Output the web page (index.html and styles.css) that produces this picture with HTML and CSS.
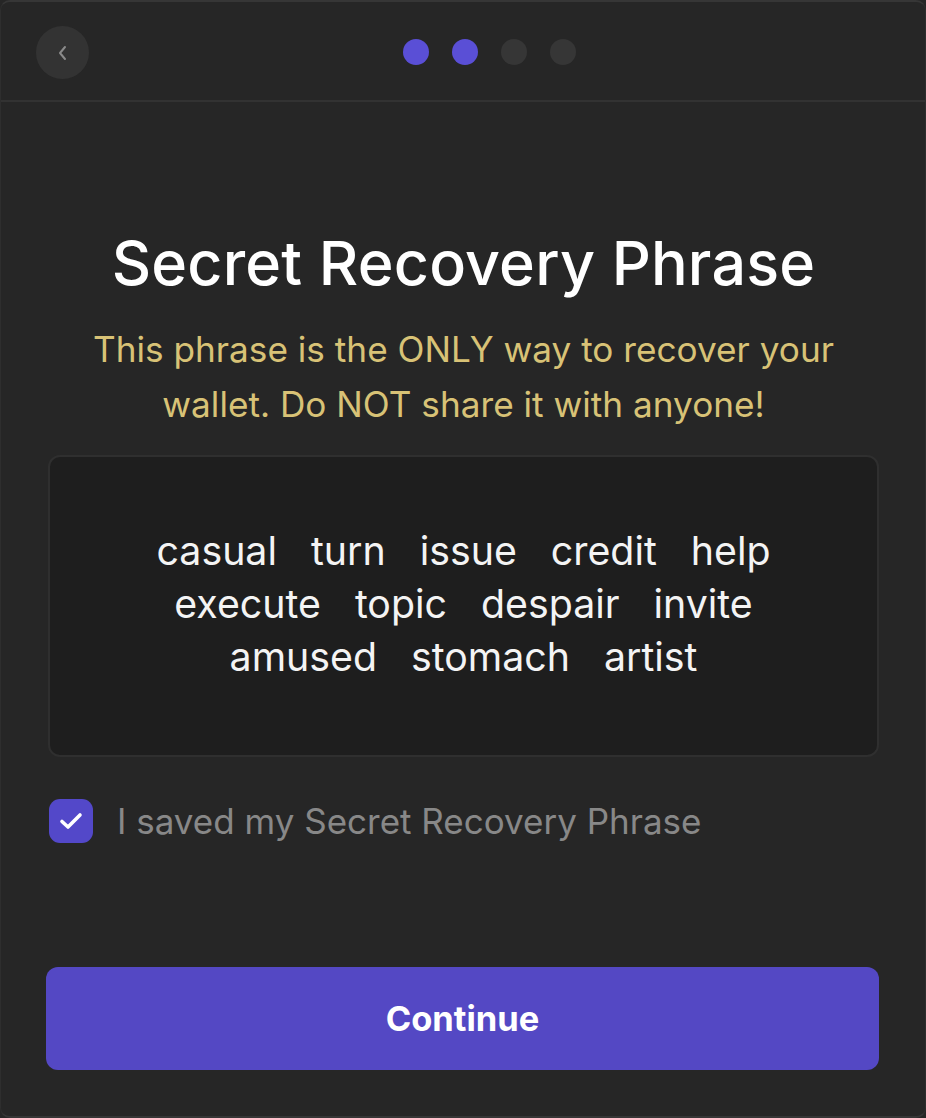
FILE: index.html
```html
<!DOCTYPE html>
<html lang="en">
<head>
<meta charset="utf-8">
<title>Secret Recovery Phrase</title>
<link rel="stylesheet" href="styles.css">
</head>
<body>
<div class="window">
  <header class="header">
    <button class="back" aria-label="Back">
      <svg width="14" height="20" viewBox="0 0 14 20"><path d="M9 4 L4 10 L9 16" fill="none" stroke="#8a8a8a" stroke-width="2" stroke-linecap="round" stroke-linejoin="round"/></svg>
    </button>
    <div class="steps">
      <span class="dot active"></span>
      <span class="dot active"></span>
      <span class="dot"></span>
      <span class="dot"></span>
    </div>
  </header>
  <main class="content">
    <h1 class="title">Secret Recovery Phrase</h1>
    <p class="warning">This phrase is the ONLY way to recover your wallet. Do NOT share it with anyone!</p>
    <div class="phrase">
      <div class="words">
        <span>casual</span><span>turn</span><span>issue</span><span>credit</span><span>help</span>
        <span>execute</span><span>topic</span><span>despair</span><span>invite</span>
        <span>amused</span><span>stomach</span><span>artist</span>
      </div>
    </div>
    <label class="check">
      <span class="box">
        <svg width="26" height="22" viewBox="0 0 26 22"><path d="M4 11.5 L10 17 L22 5" fill="none" stroke="#ffffff" stroke-width="3.6" stroke-linecap="round" stroke-linejoin="round"/></svg>
      </span>
      <span class="label">I saved my Secret Recovery Phrase</span>
    </label>
    <div class="spacer"></div>
    <button class="continue">Continue</button>
  </main>
</div>
</body>
</html>
```

FILE: styles.css
```css
* { box-sizing: border-box; }
html, body {
  margin: 0;
  padding: 0;
  background: #262626;
}
body {
  font-family: Inter, "Noto Sans", sans-serif;
  color: #ffffff;
}
.window {
  width: 926px;
  height: 1118px;
  background: #262626;
  border-top: 2px solid #363636;
  border-bottom: 2px solid #363636;
  border-left: 1px solid #2e2e2e;
  border-right: 1px solid #2e2e2e;
  border-radius: 10px;
  display: flex;
  flex-direction: column;
  overflow: hidden;
}
.header {
  position: relative;
  height: 100px;
  flex: 0 0 100px;
  border-bottom: 2px solid #323232;
  display: flex;
  align-items: center;
  justify-content: center;
}
.back {
  position: absolute;
  left: 35px;
  top: 24px;
  width: 53px;
  height: 53px;
  border-radius: 50%;
  border: none;
  background: #333333;
  display: flex;
  align-items: center;
  justify-content: center;
  padding: 0;
}
.steps {
  display: flex;
  gap: 23px;
  margin-left: 53px;
  margin-top: 2px;
}
.dot {
  width: 26px;
  height: 26px;
  border-radius: 50%;
  background: #363636;
}
.dot.active { background: #5a4fd6; }
.content {
  flex: 1;
  display: flex;
  flex-direction: column;
  padding: 128px 45px 46px 46px;
}
.title {
  margin: 0;
  text-align: center;
  font-size: 61px;
  font-weight: 500;
  line-height: 66px;
  letter-spacing: 0.2px;
}
.warning {
  margin: 26px 10px 0;
  text-align: center;
  color: #d8c276;
  font-size: 35.2px;
  line-height: 55px;
  font-weight: 400;
}
.phrase {
  margin-top: 23px;
  margin-left: 1px;
  margin-right: 1px;
  height: 302px;
  background: #1e1e1e;
  border: 2px solid #2f2f2f;
  border-radius: 12px;
  display: flex;
  align-items: center;
  justify-content: center;
  padding: 0 60px 6px;
}
.words {
  display: flex;
  flex-wrap: wrap;
  justify-content: center;
  column-gap: 34px;
  font-size: 39.3px;
  line-height: 53px;
  color: #f4f4f4;
  margin-top: 0;
}
.check {
  display: flex;
  align-items: center;
  gap: 24px;
  margin-top: 42px;
  margin-left: 2px;
}
.box {
  width: 44px;
  height: 44px;
  border-radius: 11px;
  background: #5348c9;
  display: flex;
  align-items: center;
  justify-content: center;
}
.label {
  font-size: 35px;
  color: #888888;
  line-height: 44px;
}
.spacer { flex: 1; }
.continue {
  height: 103px;
  width: 100%;
  border: none;
  border-radius: 12px;
  background: #5448c4;
  color: #ffffff;
  font-family: Inter, "Noto Sans", sans-serif;
  font-size: 34.5px;
  font-weight: 700;
  margin-left: -1px;
}
```
